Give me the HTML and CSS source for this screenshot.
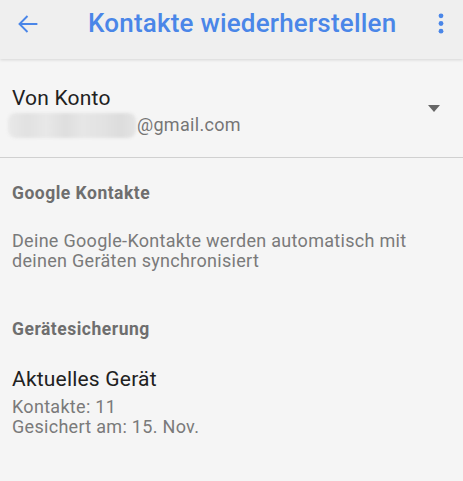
FILE: index.html
```html
<!DOCTYPE html>
<html lang="de">

<head>
    <meta charset="UTF-8">
    <meta name="viewport" content="width=device-width, initial-scale=1.0">
    <title>Kontakte wiederherstellen</title>
    <link rel="stylesheet" href="styles.css">
</head>

<body>

    <header class="toolbar">
        <svg class="back" width="30" height="30" viewBox="0 0 24 24">
            <path d="M19.5 12H6M11.6 5.6L5.2 12l6.4 6.4" fill="none" stroke="#4a86e8" stroke-width="1.5"/>
        </svg>
        <h1 class="title">Kontakte wiederherstellen</h1>
        <svg class="more" width="24" height="24" viewBox="0 0 24 24">
            <circle cx="12" cy="4.8" r="2.4" fill="#4a86e8"/>
            <circle cx="12" cy="12.5" r="2.4" fill="#4a86e8"/>
            <circle cx="12" cy="20.2" r="2.4" fill="#4a86e8"/>
        </svg>
    </header>

    <div class="account">
        <div class="account-text">
            <div class="primary">Von Konto</div>
            <div class="email">
                <span class="blur"></span>@gmail.com
            </div>
        </div>
        <span class="caret"></span>
    </div>

    <section class="group">
        <h2 class="group-title">Google Kontakte</h2>
        <p class="note">Deine Google-Kontakte werden automatisch mit deinen Geräten synchronisiert</p>
    </section>

    <section class="group">
        <h2 class="group-title">Gerätesicherung</h2>
        <div class="item">
            <div class="primary">Aktuelles Gerät</div>
            <div class="details">
                <div class="secondary">Kontakte: 11</div>
                <div class="secondary">Gesichert am: 15. Nov.</div>
            </div>
        </div>
    </section>

</body>

</html>
```

FILE: styles.css
```css
body {
    margin: 0;
    background-color: #f5f5f5;
    font-family: Roboto, "Noto Sans", sans-serif;
}

/* Top bar */
.toolbar {
    display: flex;
    align-items: flex-start;
    height: 59px;
    box-sizing: border-box;
    padding: 8px 10px 0 13px;
    background-color: #efefef;
    box-shadow: 0 1px 3px rgba(0, 0, 0, 0.13);
    position: relative;
}

.back {
    flex: none;
    margin-top: 1px;
}

.title {
    flex: 1;
    margin: 0 0 0 45px;
    font-size: 26px;
    font-weight: 500;
    line-height: 30px;
    letter-spacing: 0.2px;
    color: #4a86e8;
    white-space: nowrap;
}

.more {
    flex: none;
    margin-top: 3px;
}

/* Account picker */
.account {
    display: flex;
    align-items: center;
    padding: 26px 23px 19px 12px;
    border-bottom: 1px solid #d0d0d0;
}

.account-text {
    flex: 1;
}

.primary {
    font-size: 21px;
    line-height: 27px;
    letter-spacing: 0.2px;
    color: #212121;
}

.email {
    display: flex;
    align-items: center;
    font-size: 18px;
    line-height: 26px;
    letter-spacing: 0.3px;
    color: #757575;
}

.blur {
    display: inline-block;
    width: 128px;
    height: 25px;
    margin-left: -4px;
    margin-right: 1px;
    background: linear-gradient(90deg, #e9e9e9 0%, #e1e1e1 15%, #e8e8e8 30%, #dedede 45%, #e6e6e6 58%, #e2e2e2 75%, #dcdcdc 88%, #e4e4e4 100%);
    border-radius: 8px;
    filter: blur(1.5px);
}

.caret {
    width: 0;
    height: 0;
    margin-top: -7px;
    border-left: 6.5px solid transparent;
    border-right: 6.5px solid transparent;
    border-top: 7px solid #666;
}

/* Sections */
.group {
    padding: 0 12px;
}

.group-title {
    margin: 0;
    padding-top: 25px;
    font-size: 17.5px;
    font-weight: bold;
    line-height: 20px;
    letter-spacing: 0.5px;
    color: #6e6e6e;
}

.group + .group .group-title {
    padding-top: 48px;
}

.note {
    margin: 28px 0 0;
    font-size: 18px;
    line-height: 20px;
    letter-spacing: 0.3px;
    color: #7a7a7a;
}

.item {
    margin-top: 27px;
}

.item .primary {
    line-height: 26px;
}

.details {
    margin-top: 5px;
}

.secondary {
    font-size: 18px;
    line-height: 20px;
    letter-spacing: 0.3px;
    color: #7a7a7a;
}
```
